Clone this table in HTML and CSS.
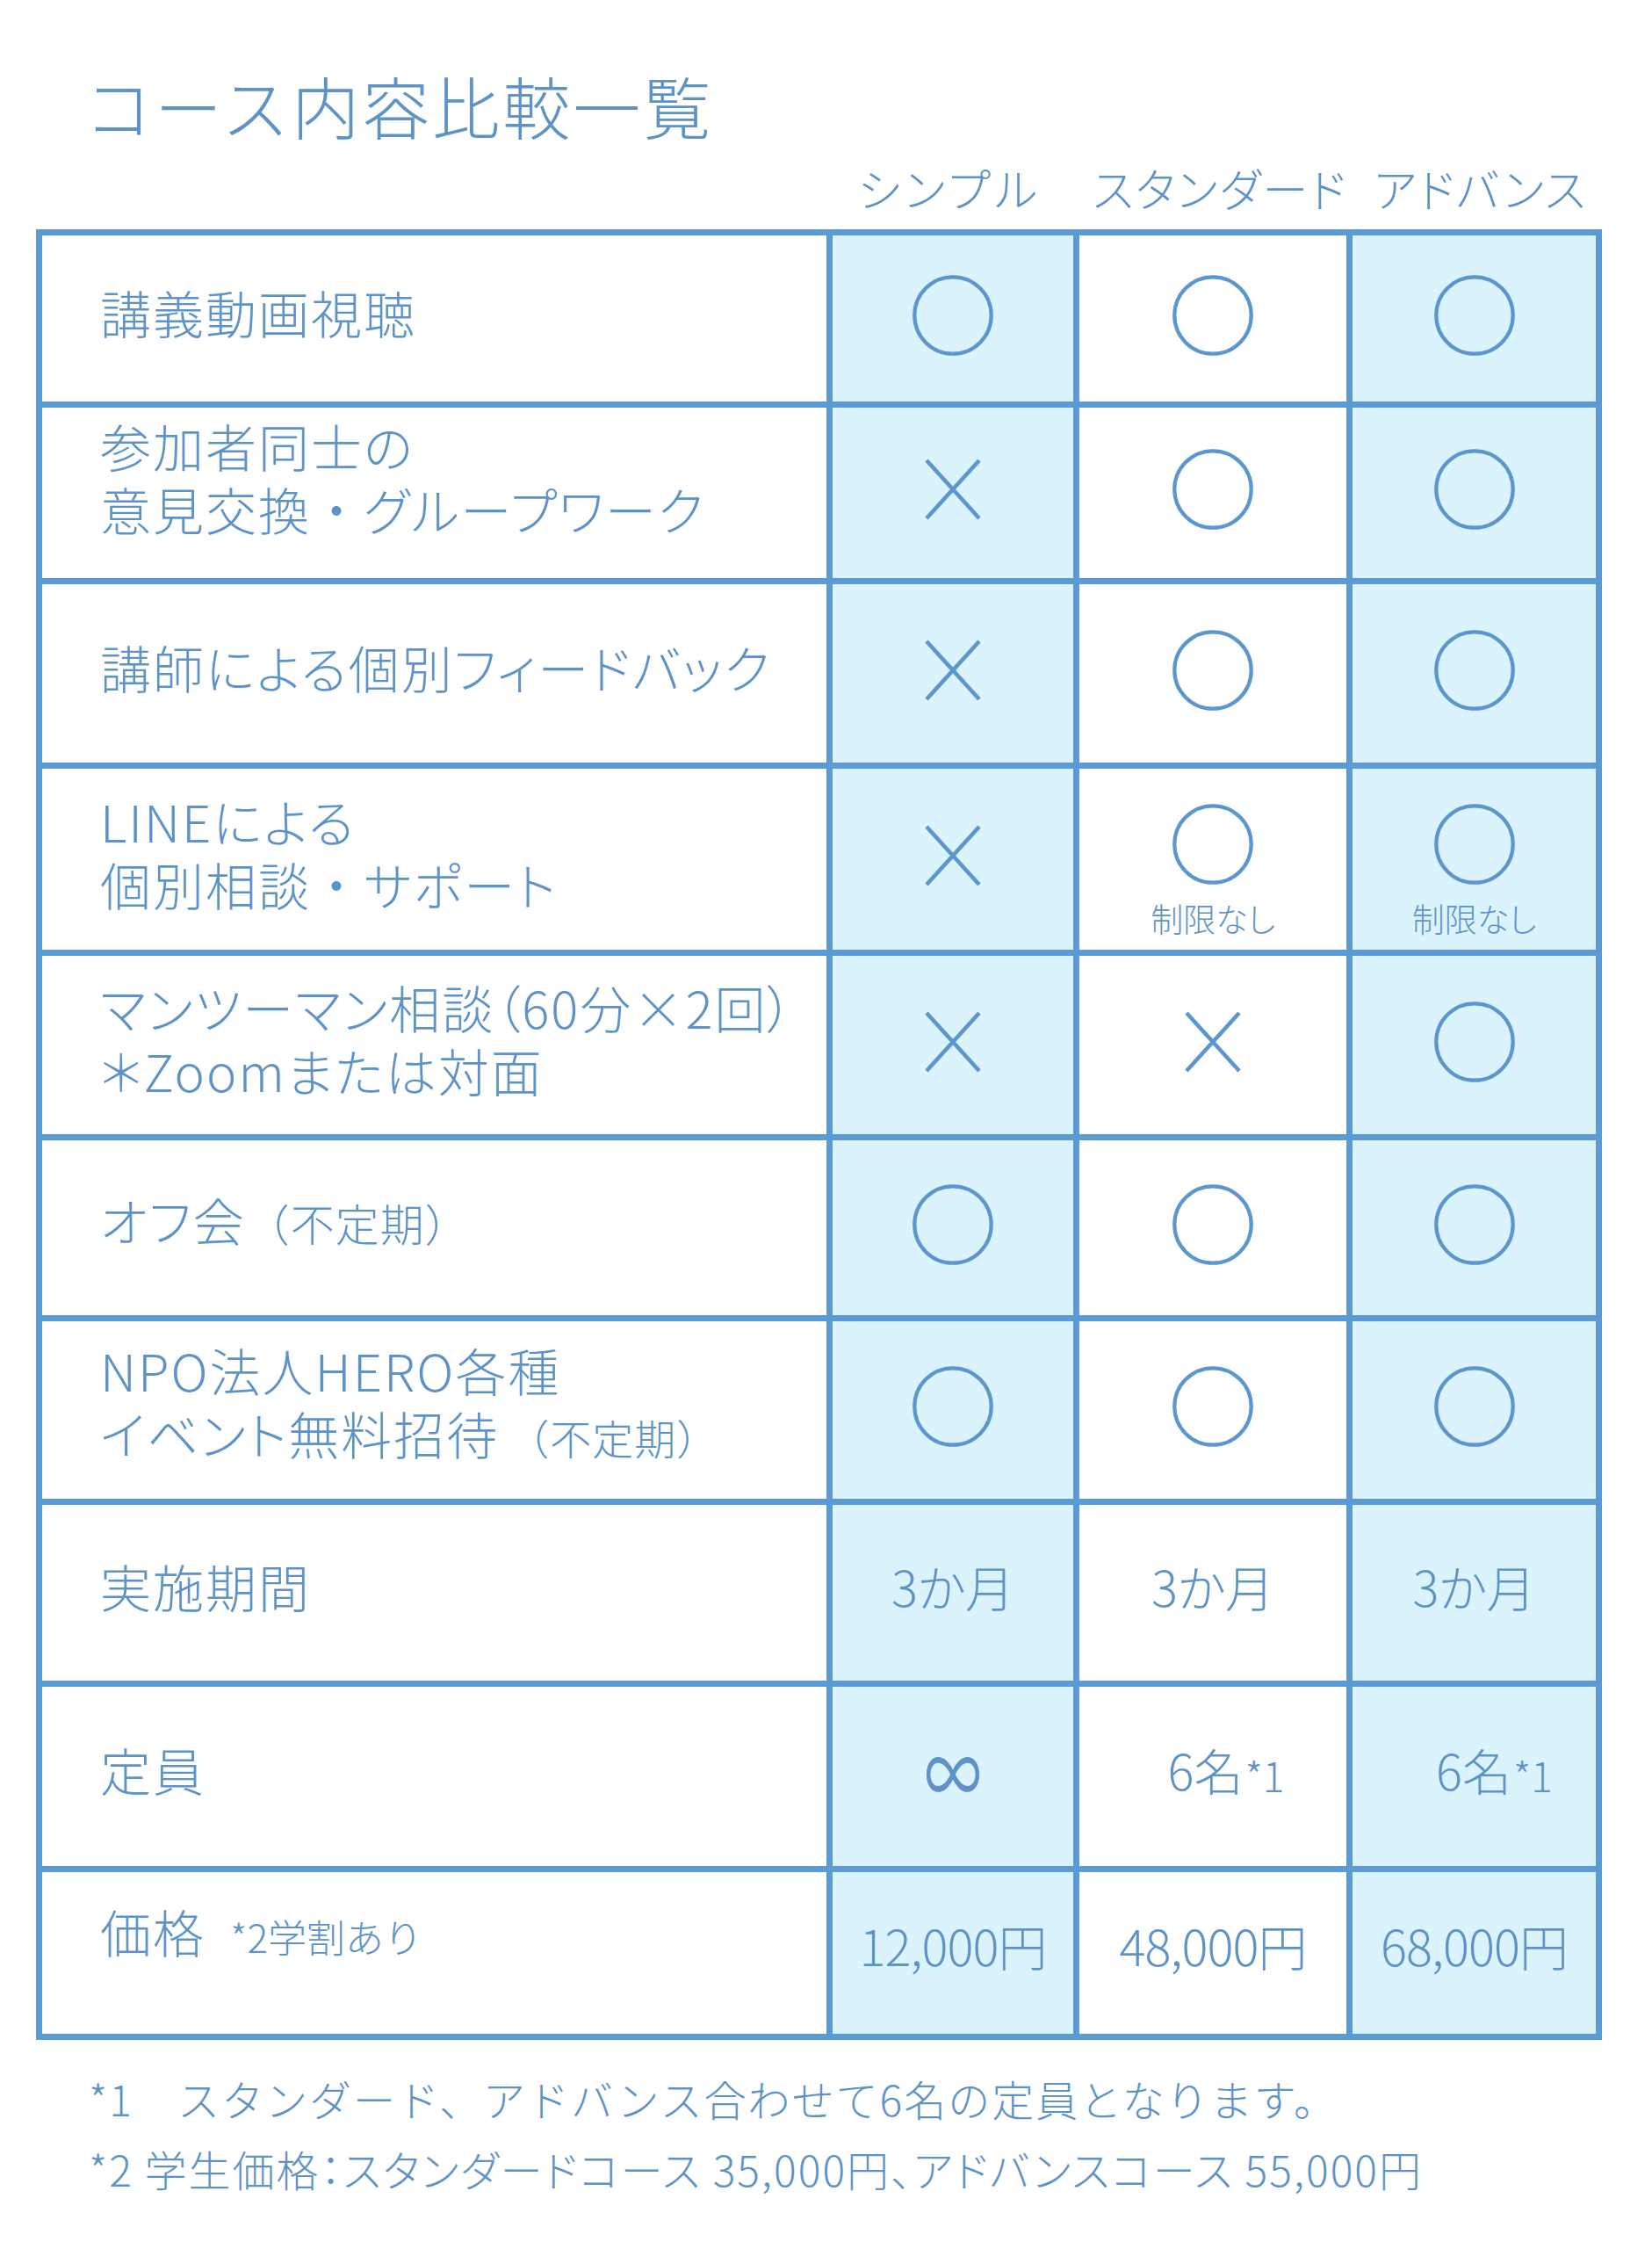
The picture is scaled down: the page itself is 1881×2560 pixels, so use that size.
FILE: index.html
```html
<!DOCTYPE html>
<html lang="ja">
<head>
  <meta charset="UTF-8">
  <meta name="viewport" content="width=device-width, initial-scale=1.0">
  <title>コース内容比較一覧</title>
  <link rel="stylesheet" href="styles.css">
</head>
<body>

<svg class="defs" aria-hidden="true">
  <symbol id="maru" viewBox="0 0 100 100">
    <circle cx="50" cy="50" r="47.5" fill="none" stroke="currentColor" stroke-width="4.6"/>
  </symbol>
  <symbol id="batsu" viewBox="0 0 64 70">
    <path d="M2 2 L62 68 M62 2 L2 68" fill="none" stroke="currentColor" stroke-width="4.6"/>
  </symbol>
</svg>

<div class="page">
  <h1 class="title">コース内容比較一覧</h1>

  <div class="heads">
    <div></div>
    <div class="head simple">シンプル</div>
    <div class="head shifted">スタンダード</div>
    <div class="head shifted">アドバンス</div>
  </div>

  <div class="chart">
    <!-- 講義動画視聴 -->
    <div class="cell label"><p>講義動画視聴</p></div>
    <div class="cell mark-cell tint"><svg class="maru"><use href="#maru"/></svg></div>
    <div class="cell mark-cell"><svg class="maru"><use href="#maru"/></svg></div>
    <div class="cell mark-cell tint"><svg class="maru"><use href="#maru"/></svg></div>

    <!-- グループワーク -->
    <div class="cell label lift"><p>参加者同士の<br>意見交換<span class="dot">・</span>グループワーク</p></div>
    <div class="cell mark-cell tint"><svg class="batsu"><use href="#batsu"/></svg></div>
    <div class="cell mark-cell"><svg class="maru"><use href="#maru"/></svg></div>
    <div class="cell mark-cell tint"><svg class="maru"><use href="#maru"/></svg></div>

    <!-- フィードバック -->
    <div class="cell label"><p>講師による個別フィードバック</p></div>
    <div class="cell mark-cell tint"><svg class="batsu"><use href="#batsu"/></svg></div>
    <div class="cell mark-cell"><svg class="maru"><use href="#maru"/></svg></div>
    <div class="cell mark-cell tint"><svg class="maru"><use href="#maru"/></svg></div>

    <!-- LINE -->
    <div class="cell label"><p>LINEによる<br>個別相談<span class="dot">・</span>サポート</p></div>
    <div class="cell mark-cell tint"><svg class="batsu"><use href="#batsu"/></svg></div>
    <div class="cell mark-cell stacked"><svg class="maru"><use href="#maru"/></svg><span class="note">制限なし</span></div>
    <div class="cell mark-cell stacked tint"><svg class="maru"><use href="#maru"/></svg><span class="note">制限なし</span></div>

    <!-- マンツーマン -->
    <div class="cell label"><p>マンツーマン相談（60分×2回）<br>＊Zoomまたは対面</p></div>
    <div class="cell mark-cell tint"><svg class="batsu"><use href="#batsu"/></svg></div>
    <div class="cell mark-cell"><svg class="batsu"><use href="#batsu"/></svg></div>
    <div class="cell mark-cell tint"><svg class="maru"><use href="#maru"/></svg></div>

    <!-- オフ会 -->
    <div class="cell label"><p>オフ会<span class="aside">（不定期）</span></p></div>
    <div class="cell mark-cell tint"><svg class="maru"><use href="#maru"/></svg></div>
    <div class="cell mark-cell"><svg class="maru"><use href="#maru"/></svg></div>
    <div class="cell mark-cell tint"><svg class="maru"><use href="#maru"/></svg></div>

    <!-- イベント -->
    <div class="cell label"><p>NPO法人HERO各種<br>イベント無料招待<span class="aside small">（不定期）</span></p></div>
    <div class="cell mark-cell tint"><svg class="maru"><use href="#maru"/></svg></div>
    <div class="cell mark-cell"><svg class="maru"><use href="#maru"/></svg></div>
    <div class="cell mark-cell tint"><svg class="maru"><use href="#maru"/></svg></div>

    <!-- 実施期間 -->
    <div class="cell label"><p>実施期間</p></div>
    <div class="cell value tint">3か月</div>
    <div class="cell value">3か月</div>
    <div class="cell value tint">3か月</div>

    <!-- 定員 -->
    <div class="cell label"><p>定員</p></div>
    <div class="cell value tint"><span class="infinity">∞</span></div>
    <div class="cell value count">6名<span class="ref">*1</span></div>
    <div class="cell value count wide tint">6名<span class="ref">*1</span></div>

    <!-- 価格 -->
    <div class="cell label high"><p>価格<span class="sub">*2学割あり</span></p></div>
    <div class="cell value price tint">12,000円</div>
    <div class="cell value price">48,000円</div>
    <div class="cell value price tint">68,000円</div>
  </div>

  <div class="notes">
    <p>*1　スタンダード、アドバンス合わせて6名の定員となります。</p>
    <p class="tight">*2 学生価格：スタンダードコース 35,000円、アドバンスコース 55,000円</p>
  </div>
</div>

</body>
</html>
```

FILE: styles.css
```css
body {
  margin: 0;
  background-color: #ffffff;
  color: #5e93c7;
  font-family: 'Noto Sans CJK JP', 'Noto Sans', sans-serif;
  font-weight: 300;
}

.defs {
  display: none;
}

.page {
  padding: 81px 0 60px 41px;
}

.title {
  margin: 0 0 0 55px;
  font-size: 77px;
  font-weight: 300;
  line-height: 1;
  letter-spacing: 3px;
}

.heads {
  display: grid;
  grid-template-columns: 900px 281px 311px 284px;
  margin-top: 23px;
  height: 80px;
}

.head {
  text-align: center;
  font-size: 52px;
  line-height: 66px;
  letter-spacing: 2px;
  font-feature-settings: "palt";
  white-space: nowrap;
}

.head.simple {
  letter-spacing: 5px;
}

.head.shifted {
  padding-left: 22px;
}

.chart {
  display: grid;
  grid-template-columns: 900px 281px 311px 284px;
  grid-template-rows: 196px 201px 210px 213px 210px 206px 209px 207px 211px 191px;
  width: max-content;
  border-right: 7px solid #5b9bd5;
  border-bottom: 7px solid #5b9bd5;
}

.cell {
  border-top: 7px solid #5b9bd5;
  border-left: 7px solid #5b9bd5;
  display: flex;
  align-items: center;
  justify-content: center;
  background-color: #ffffff;
}

.tint {
  background-color: #daf3fd;
}

.label {
  justify-content: flex-start;
  padding-left: 66px;
  padding-bottom: 16px;
  font-size: 58px;
  line-height: 72px;
  letter-spacing: 2px;
  font-feature-settings: "palt";
  white-space: nowrap;
}

.label p {
  margin: 0;
}

.label.lift {
  padding-bottom: 36px;
}

.label.high {
  padding-bottom: 44px;
}

.dot {
  font-feature-settings: normal;
}

.aside {
  font-size: 50px;
  letter-spacing: 1px;
  font-feature-settings: normal;
}

.aside.small {
  font-size: 47px;
  margin-left: 10px;
}

.sub {
  font-size: 44px;
  margin-left: 28px;
  letter-spacing: 0;
  font-feature-settings: normal;
}

.mark-cell {
  color: #5b96cf;
  padding-bottom: 8px;
}

.maru {
  width: 92px;
  height: 92px;
}

.batsu {
  width: 64px;
  height: 70px;
}

.stacked {
  flex-direction: column;
  justify-content: flex-start;
  padding-top: 40px;
  padding-bottom: 0;
  gap: 16px;
}

.note {
  font-size: 37px;
  line-height: 44px;
  color: #5e93c7;
  font-feature-settings: "palt";
}

.value {
  font-size: 56px;
  line-height: 1;
  padding-bottom: 16px;
  font-feature-settings: "palt";
}

.count {
  padding-left: 30px;
}

.count.wide {
  padding-left: 46px;
}

.price {
  padding-bottom: 18px;
  letter-spacing: -1px;
}

.ref {
  font-size: 46px;
  margin-left: 2px;
  align-self: center;
  padding-top: 12px;
}

.infinity {
  display: inline-block;
  font-size: 76px;
  font-weight: 400;
  transform: scale(0.85, 1.3);
}

.notes {
  margin: 26px 0 0 60px;
  font-size: 48px;
  letter-spacing: 2px;
}

.notes p {
  margin: 0;
  line-height: 80px;
  white-space: nowrap;
}

.notes .tight {
  font-feature-settings: "palt";
}
```
